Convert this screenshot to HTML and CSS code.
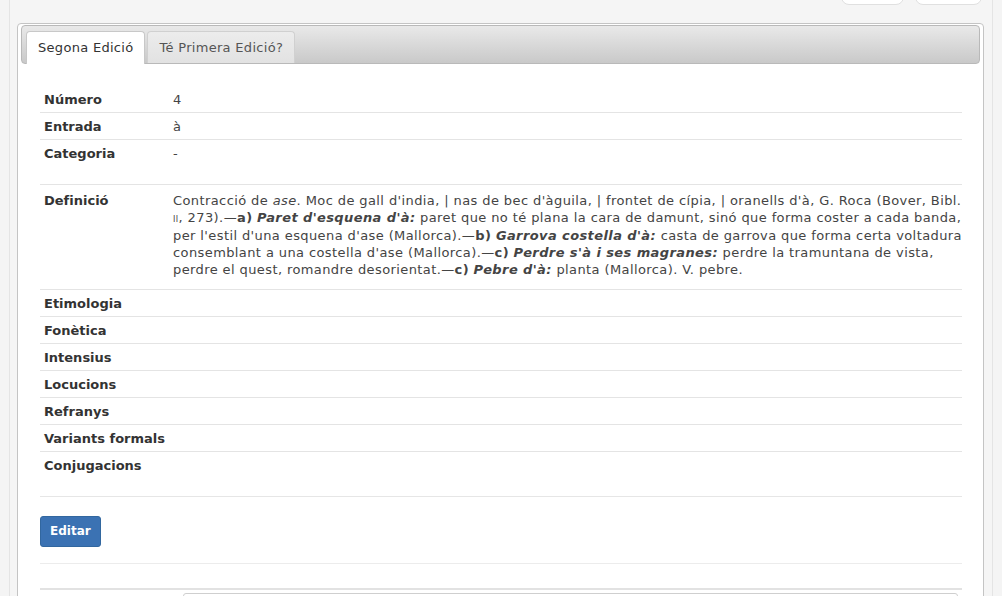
FILE: index.html
```html
<!DOCTYPE html>
<html lang="ca">
<head>
<meta charset="utf-8">
<title>Entrada</title>
<link rel="stylesheet" href="styles.css">
</head>
<body>
<div class="page">
  <div class="topbar">
    <button class="tbtn tbtn-a">Cercar</button>
    <button class="tbtn tbtn-b">Sortir</button>
  </div>
  <div class="tabs">
    <ul class="tabnav">
      <li class="tab active">Segona Edició</li>
      <li class="tab">Té Primera Edició?</li>
    </ul>
    <div class="tabpanel">
      <table class="info">
        <tr><th>Número</th><td>4</td></tr>
        <tr><th>Entrada</th><td>à</td></tr>
        <tr class="tall"><th>Categoria</th><td>-</td></tr>
        <tr class="defrow"><th>Definició</th><td><p class="def">Contracció de <i>ase</i>. Moc de gall d'india, | nas de bec d'àguila, | frontet de cípia, | oranells d'à, G. Roca (Bover, Bibl. <span class="sc">ii</span>, 273).—<b>a)</b> <b><i>Paret d'esquena d'à:</i></b> paret que no té plana la cara de damunt, sinó que forma coster a cada banda, per l'estil d'una esquena d'ase (Mallorca).—<b>b)</b> <b><i>Garrova costella d'à:</i></b> casta de garrova que forma certa voltadura consemblant a una costella d'ase (Mallorca).—<b>c)</b> <b><i>Perdre s'à i ses magranes:</i></b> perdre la tramuntana de vista,<br>perdre el quest, romandre desorientat.—<b>c)</b> <b><i>Pebre d'à:</i></b> planta (Mallorca). V. pebre.</p></td></tr>
        <tr><th>Etimologia</th><td></td></tr>
        <tr><th>Fonètica</th><td></td></tr>
        <tr><th>Intensius</th><td></td></tr>
        <tr><th>Locucions</th><td></td></tr>
        <tr><th>Refranys</th><td></td></tr>
        <tr><th>Variants formals</th><td></td></tr>
        <tr class="tall"><th>Conjugacions</th><td></td></tr>
      </table>
      <div class="actions">
        <button class="btn">Editar</button>
      </div>
      <div class="sep"></div>
      <div class="form-row">
        <label class="flabel">Nova entrada</label>
        <div class="finput"></div>
      </div>
    </div>
  </div>
</div>
</body>
</html>
```

FILE: styles.css
```css
html, body {
  margin: 0;
  padding: 0;
  height: 100%;
  overflow: hidden;
}
body {
  background: #f4f4f4;
  font-family: "DejaVu Sans", Verdana, sans-serif;
  font-size: 13px;
  color: #333;
}
.page {
  margin: 0 9px;
  min-height: 100%;
  border-left: 1px solid #e4e4e4;
  border-right: 1px solid #e4e4e4;
  padding: 0 8px 0 7px;
  background: #f5f5f5;
}
.topbar {
  display: flex;
  justify-content: flex-end;
  gap: 11px;
  padding-right: 2px;
  height: 23px;
}
.tbtn {
  margin-top: -26px;
  height: 31px;
  background: #fff;
  border: 1px solid #e0e0e0;
  border-radius: 8px;
  color: #fff;
  font: 12px "DejaVu Sans", sans-serif;
}
.tbtn-a { width: 63px; }
.tbtn-b { width: 67px; }

.tabs {
  background: #fff;
  border: 1px solid #c4c4c4;
  border-radius: 4px;
  padding: 1px 3px 2px 3px;
  min-height: 700px;
}
.tabnav {
  list-style: none;
  margin: 0;
  padding: 5px 4px 0;
  height: 32px;
  display: flex;
  gap: 2px;
  border: 1px solid #b9b9b9;
  border-radius: 4px;
  background: linear-gradient(#e9e9e9, #c9c9c9);
}
.tab {
  height: 32px;
  box-sizing: border-box;
  padding: 8px 11px 0;
  line-height: 16px;
  font-size: 13px;
  letter-spacing: 0.3px;
  color: #555;
  background: linear-gradient(#ececec, #e2e2e2);
  border: 1px solid #d0d0d0;
  border-bottom: none;
  border-radius: 4px 4px 0 0;
}
.tab.active {
  background: #fff;
  color: #333;
  border-color: #c8c8c8;
  height: 33px;
}
.tabpanel {
  padding: 22px 18px 0 19px;
}
.info {
  width: 100%;
  border-collapse: collapse;
}
.info th, .info td {
  padding: 5px 4px 4px;
  line-height: 17px;
  vertical-align: top;
  text-align: left;
  border-top: 1px solid #e4e4e4;
}
.info td {
  padding-right: 0;
}
.info tr:first-child th, .info tr:first-child td {
  border-top: none;
}
.info th {
  width: 120px;
  white-space: nowrap;
  font-weight: bold;
  color: #333;
}
.info td {
  color: #444;
  letter-spacing: 0.4px;
}
.info tr.tall th, .info tr.tall td {
  padding-bottom: 22px;
}
.defrow th, .defrow td {
  padding-top: 7px;
}
.def {
  margin: 0 0 7px;
}
.sc {
  font-variant: small-caps;
  font-size: 11px;
}
.actions {
  border-top: 1px solid #e6e6e6;
  padding: 19px 0 16px;
}
.btn {
  font: bold 12px "DejaVu Sans", sans-serif;
  color: #fff;
  background: #3b72b3;
  border: 1px solid #32679f;
  border-radius: 3px;
  padding: 7px 9px;
  line-height: 15px;
}
.sep {
  border-top: 1px solid #ececec;
  height: 24px;
}
.form-row {
  border-top: 2px solid #e2e2e2;
  padding-top: 3px;
  display: flex;
  align-items: flex-start;
}
.flabel {
  box-sizing: border-box;
  width: 143px;
  padding: 4px 4px 0;
  font-weight: bold;
  color: #888;
}
.finput {
  flex: 1;
  height: 28px;
  margin-right: 4px;
  border: 1px solid #cfcfcf;
  border-radius: 3px;
  background: #fff;
}
```
